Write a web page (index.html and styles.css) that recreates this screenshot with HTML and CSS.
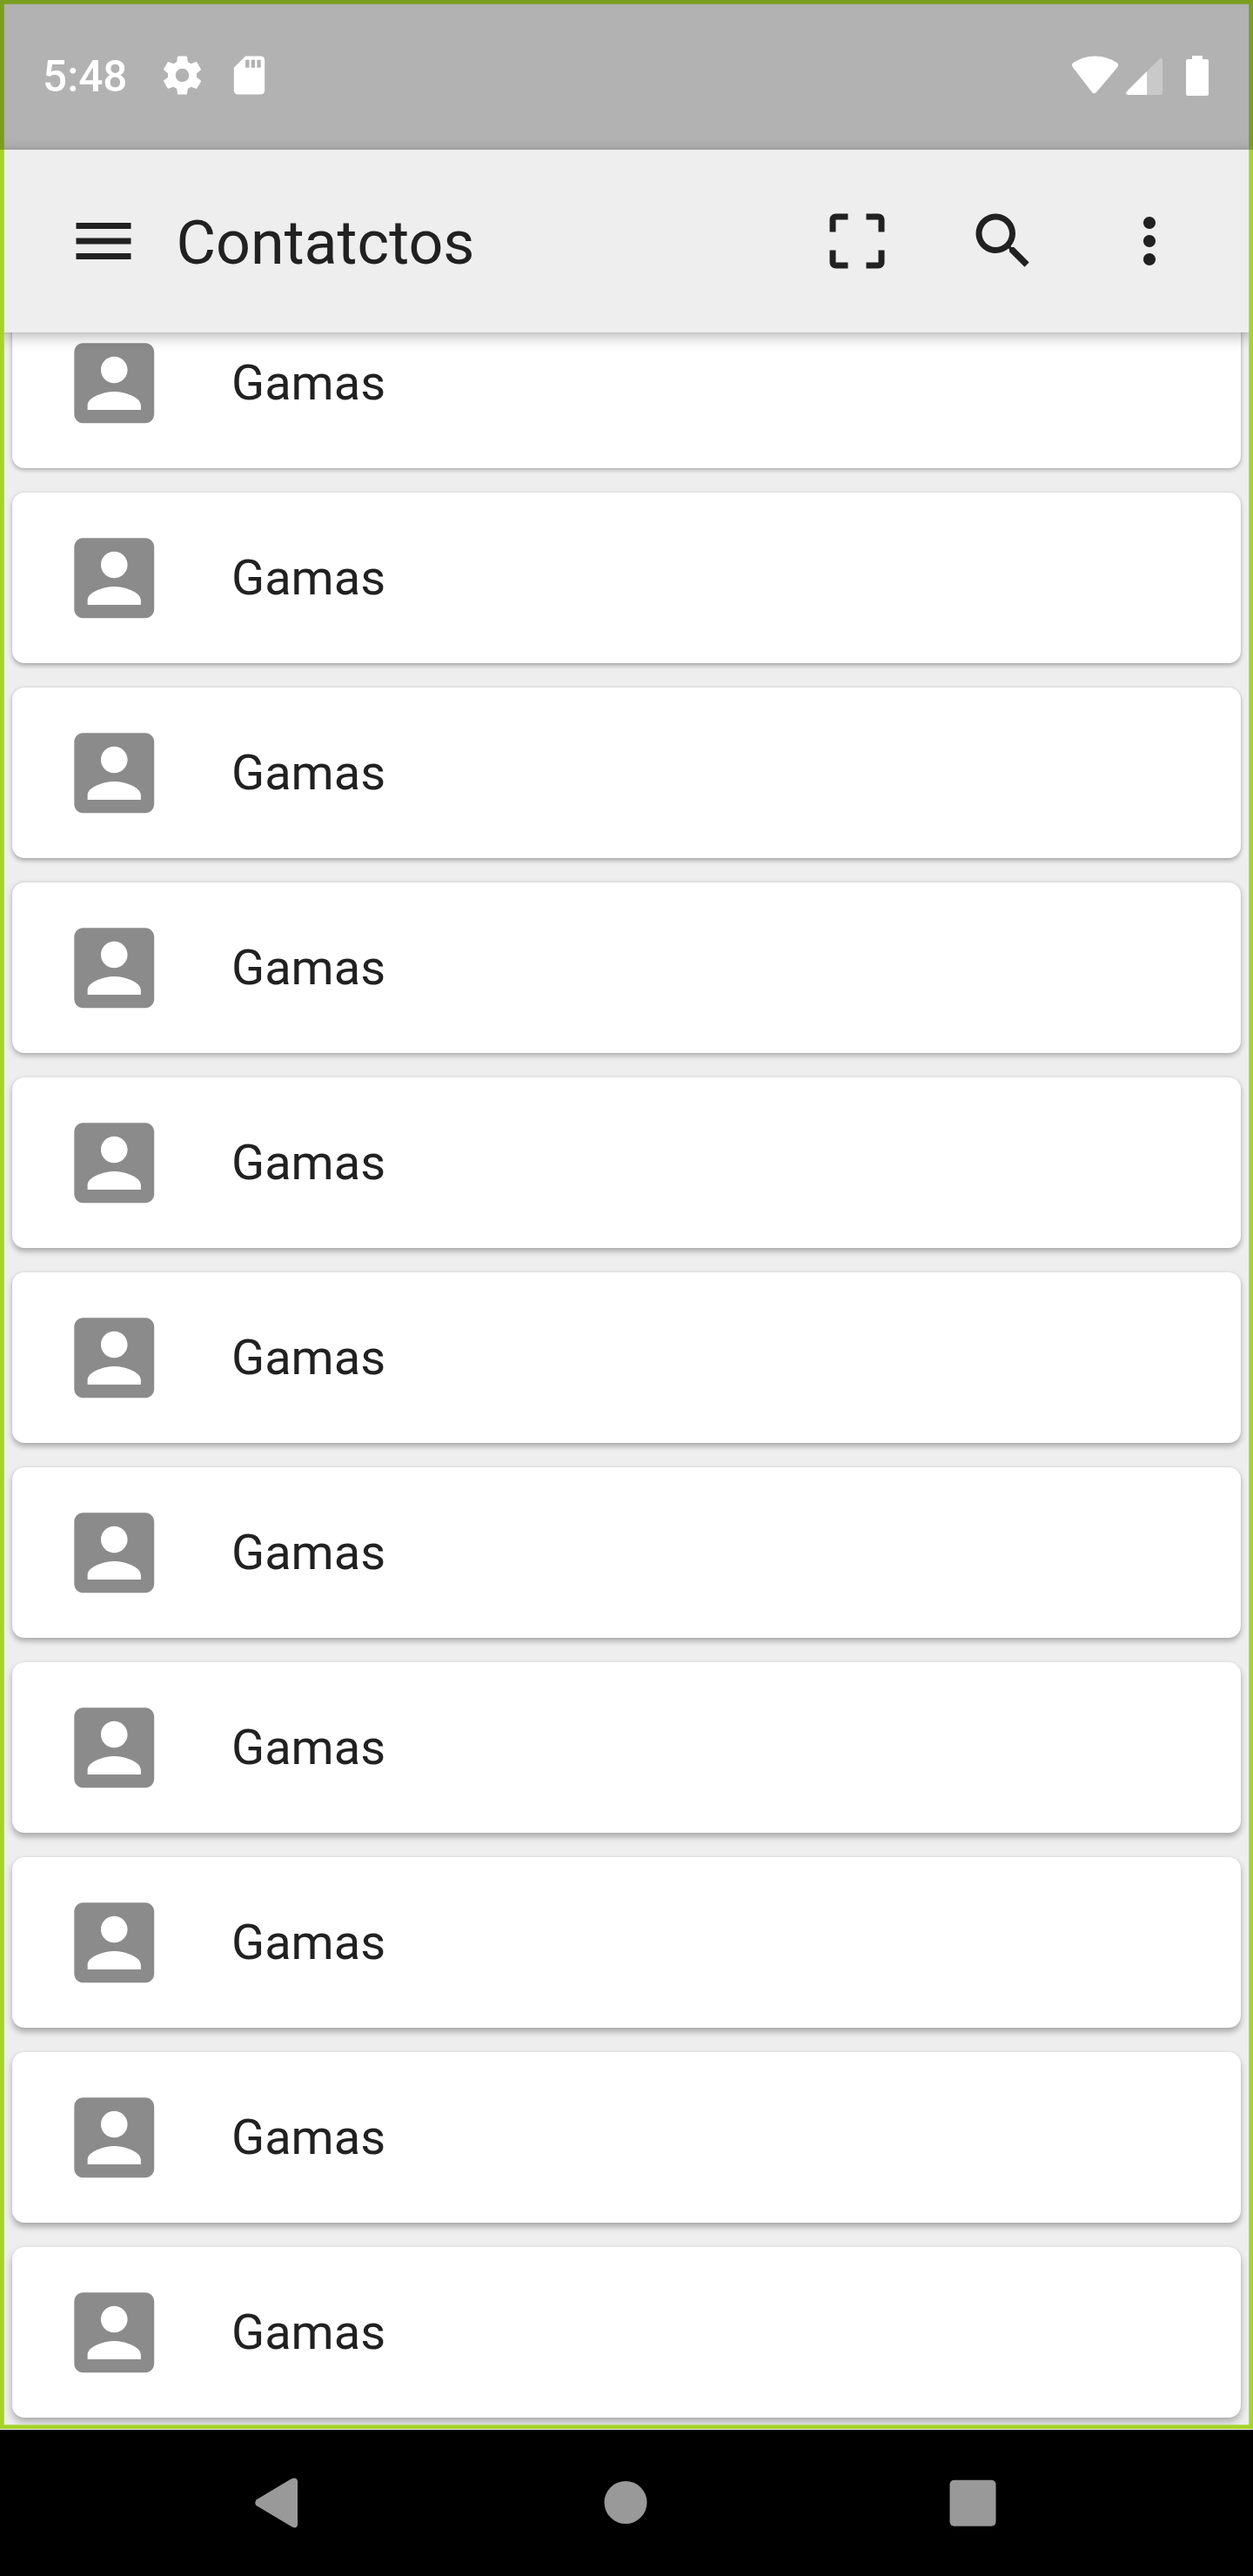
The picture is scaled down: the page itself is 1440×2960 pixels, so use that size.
FILE: index.html
```html
<!DOCTYPE html>
<html lang="pt">
<head>
<meta charset="utf-8">
<title>Contatctos</title>
<link rel="stylesheet" href="styles.css">
</head>
<body>
<svg width="0" height="0" class="defs" aria-hidden="true">
  <symbol id="account" viewBox="0 0 24 24"><path d="M3 5v14c0 1.100.89 2 2 2h14c1.100 0 2-.9 2-2V5c0-1.100-.9-2-2-2H5c-1.110 0-2 .9-2 2zm12 4c0 1.660-1.340 3-3 3s-3-1.340-3-3 1.340-3 3-3 3 1.340 3 3zm-9 8c0-2 4-3.100 6-3.100s6 1.100 6 3.100v1H6v-1z"/></symbol>
</svg>
<div class="screen">
  <header class="status">
    <span class="time">5:48</span>
    <svg class="gear" viewBox="0 0 24 24"><path d="M19.430 12.980c.04-.32.07-.64.07-.98s-.03-.66-.07-.98l2.110-1.650c.19-.15.24-.42.12-.64l-2-3.460c-.12-.22-.39-.3-.61-.22l-2.490 1c-.52-.4-1.080-.73-1.690-.98l-.38-2.650C14.460 2.180 14.250 2 14 2h-4c-.25 0-.46.18-.49.42l-.38 2.650c-.61.25-1.170.59-1.690.98l-2.490-1c-.23-.09-.49 0-.61.22l-2 3.460c-.13.22-.07.49.12.64l2.110 1.650c-.04.32-.07.65-.07.98s.03.66.07.98l-2.110 1.650c-.19.15-.24.42-.12.64l2 3.460c.12.22.39.3.61.22l2.490-1c.52.4 1.080.73 1.690.98l.38 2.650c.03.24.24.42.49.42h4c.25 0 .46-.18.49-.42l.38-2.650c.61-.25 1.170-.59 1.690-.98l2.490 1c.23.09.49 0 .61-.22l2-3.460c.12-.22.07-.49-.12-.64l-2.110-1.650zM12 15.500c-1.930 0-3.500-1.570-3.500-3.500s1.570-3.500 3.500-3.500 3.500 1.570 3.500 3.500-1.570 3.500-3.500 3.500z"/></svg>
    <svg class="sd" viewBox="0 0 24 24"><path d="M18 2h-8L4 8v12c0 1.100.9 2 2 2h12c1.100 0 2-.9 2-2V4c0-1.100-.9-2-2-2zm-6 6h-2V4h2v4zm3 0h-2V4h2v4zm3 0h-2V4h2v4z"/></svg>
    <svg class="signals" viewBox="0 0 160 50">
      <path d="M2.800 11.500Q1 14 3 16.500L25 45Q27.500 47.500 30 45L54 16.500Q56 14 54.200 11.500Q42.500 3.500 28.500 3.500T2.800 11.500Z"/>
      <path class="dim" d="M88 21L102.500 6.700Q105.500 4.500 106 8V46Q106 48 104 48H88Z"/>
      <path d="M88 21V48H66.500Q63 47.500 64.500 44.500Z"/>
      <path d="M140 3h12v4h5q2 0 2 2v38q0 2-2 2h-22q-2 0-2-2V9q0-2 2-2h5z"/>
    </svg>
  </header>
  <nav class="toolbar">
    <svg class="icon" viewBox="0 0 24 24"><path d="M3 18h18v-2H3v2zm0-5h18v-2H3v2zm0-7v2h18V6H3z"/></svg>
    <h1>Contatctos</h1>
    <div class="actions">
      <svg class="icon" viewBox="0 0 24 24"><path d="M3 5v4h2V5h4V3H5c-1.100 0-2 .9-2 2zm2 10H3v4c0 1.100.9 2 2 2h4v-2H5v-4zm14 4h-4v2h4c1.100 0 2-.9 2-2v-4h-2v4zm0-16h-4v2h4v4h2V5c0-1.100-.9-2-2-2z"/></svg>
      <svg class="icon" viewBox="0 0 24 24"><path d="M15.500 14h-.79l-.28-.27C15.410 12.590 16 11.110 16 9.500 16 5.910 13.090 3 9.500 3S3 5.910 3 9.500 5.910 16 9.500 16c1.610 0 3.090-.59 4.230-1.570l.27.28v.79l5 4.990L20.490 19l-4.990-5zm-6 0C7.010 14 5 11.990 5 9.500S7.010 5 9.500 5 14 7.010 14 9.500 11.990 14 9.500 14z"/></svg>
      <svg class="icon" viewBox="0 0 24 24"><path d="M12 8c1.100 0 2-.9 2-2s-.9-2-2-2-2 .9-2 2 .9 2 2 2zm0 2c-1.100 0-2 .9-2 2s.9 2 2 2 2-.9 2-2-.9-2-2-2zm0 6c-1.100 0-2 .9-2 2s.9 2 2 2 2-.9 2-2-.9-2-2-2z"/></svg>
    </div>
  </nav>
  <main class="list">
    <div class="card" style="--i:0"><svg><use href="#account"/></svg><span>Gamas</span></div>
    <div class="card" style="--i:1"><svg><use href="#account"/></svg><span>Gamas</span></div>
    <div class="card" style="--i:2"><svg><use href="#account"/></svg><span>Gamas</span></div>
    <div class="card" style="--i:3"><svg><use href="#account"/></svg><span>Gamas</span></div>
    <div class="card" style="--i:4"><svg><use href="#account"/></svg><span>Gamas</span></div>
    <div class="card" style="--i:5"><svg><use href="#account"/></svg><span>Gamas</span></div>
    <div class="card" style="--i:6"><svg><use href="#account"/></svg><span>Gamas</span></div>
    <div class="card" style="--i:7"><svg><use href="#account"/></svg><span>Gamas</span></div>
    <div class="card" style="--i:8"><svg><use href="#account"/></svg><span>Gamas</span></div>
    <div class="card" style="--i:9"><svg><use href="#account"/></svg><span>Gamas</span></div>
    <div class="card" style="--i:10"><svg><use href="#account"/></svg><span>Gamas</span></div>
  </main>
  <div class="focus-ring"></div>
  <div class="status-shade"></div>
</div>
<footer class="navbar">
  <svg viewBox="0 0 60 60"><path d="M3.500 27L44.500 2.500Q51 -.5 52 5V55Q51 60.500 45.500 57.500L4.500 33Q2 30 4.500 27Z"/></svg>
  <svg viewBox="0 0 60 60"><circle cx="30" cy="29.500" r="24.500"/></svg>
  <svg viewBox="0 0 60 60"><rect x="3.500" y="3.700" width="53" height="53" rx="5"/></svg>
</footer>
</body>
</html>
```
FILE: styles.css
```css
* { box-sizing: border-box; }
body { margin: 0; width: 1440px; height: 2960px; overflow: hidden; background: #000; font-family: Roboto, sans-serif; color: #212121; }
svg { display: block; flex: none; }
.defs { position: absolute; }
.screen { position: relative; display: flex; flex-direction: column; height: 2792px; background: #eee; overflow: hidden; }

.status { position: relative; z-index: 5; flex: none; display: flex; align-items: center; height: 172px; padding-left: 49px; fill: #fff; color: #fff; }
.time { width: 134px; font-size: 49.500px; font-weight: 500; line-height: 58px; padding-top: 3px; }
.gear, .sd { width: 53px; height: 53px; }
.sd { margin-left: 24px; }
.signals { width: 160px; height: 50px; margin-left: auto; margin-right: 50px; }
.dim { opacity: .3; }

.toolbar { position: relative; z-index: 2; flex: none; display: flex; align-items: center; height: 210px; padding: 0 77px 0 76.500px; background: #eee; box-shadow: 0 4px 16px rgba(0,0,0,.3), 0 0 2px rgba(0,0,0,.1); }
.toolbar h1 { margin: 0 0 0 42px; font-size: 70px; font-weight: 400; line-height: 82px; padding-top: 3px; }
.icon { width: 84px; height: 84px; fill: #212121; }
.actions { display: flex; gap: 84px; margin-left: auto; }

.list { display: flex; flex-direction: column; gap: 28px; padding: 0 14px; margin-top: -40px; }
.card { flex: none; display: flex; align-items: center; height: 196px; padding-left: 56px; border-radius: 14px; background: #fff; font-size: 56px; line-height: 66px; box-shadow: 0 calc(2px + var(--i) * .3px) calc(5px + var(--i) * .3px) rgba(0,0,0,.28), 0 0 2px rgba(0,0,0,.08); }
.card svg { width: 122.500px; height: 122.500px; fill: #8b8b8b; }
.card span { margin-left: 73.500px; }

.focus-ring { position: absolute; inset: 0 0 1px; z-index: 3; border: 4px solid #a6d328; box-shadow: inset 0 0 0 1px #b5d957; }
.status-shade { position: absolute; inset: 0 0 auto; height: 172px; z-index: 4; background: rgba(0,0,0,.25); }

.navbar { display: flex; justify-content: space-between; align-items: center; height: 168px; padding: 0 292px 0 290px; fill: #999; }
.navbar svg { width: 60px; height: 60px; }
```
